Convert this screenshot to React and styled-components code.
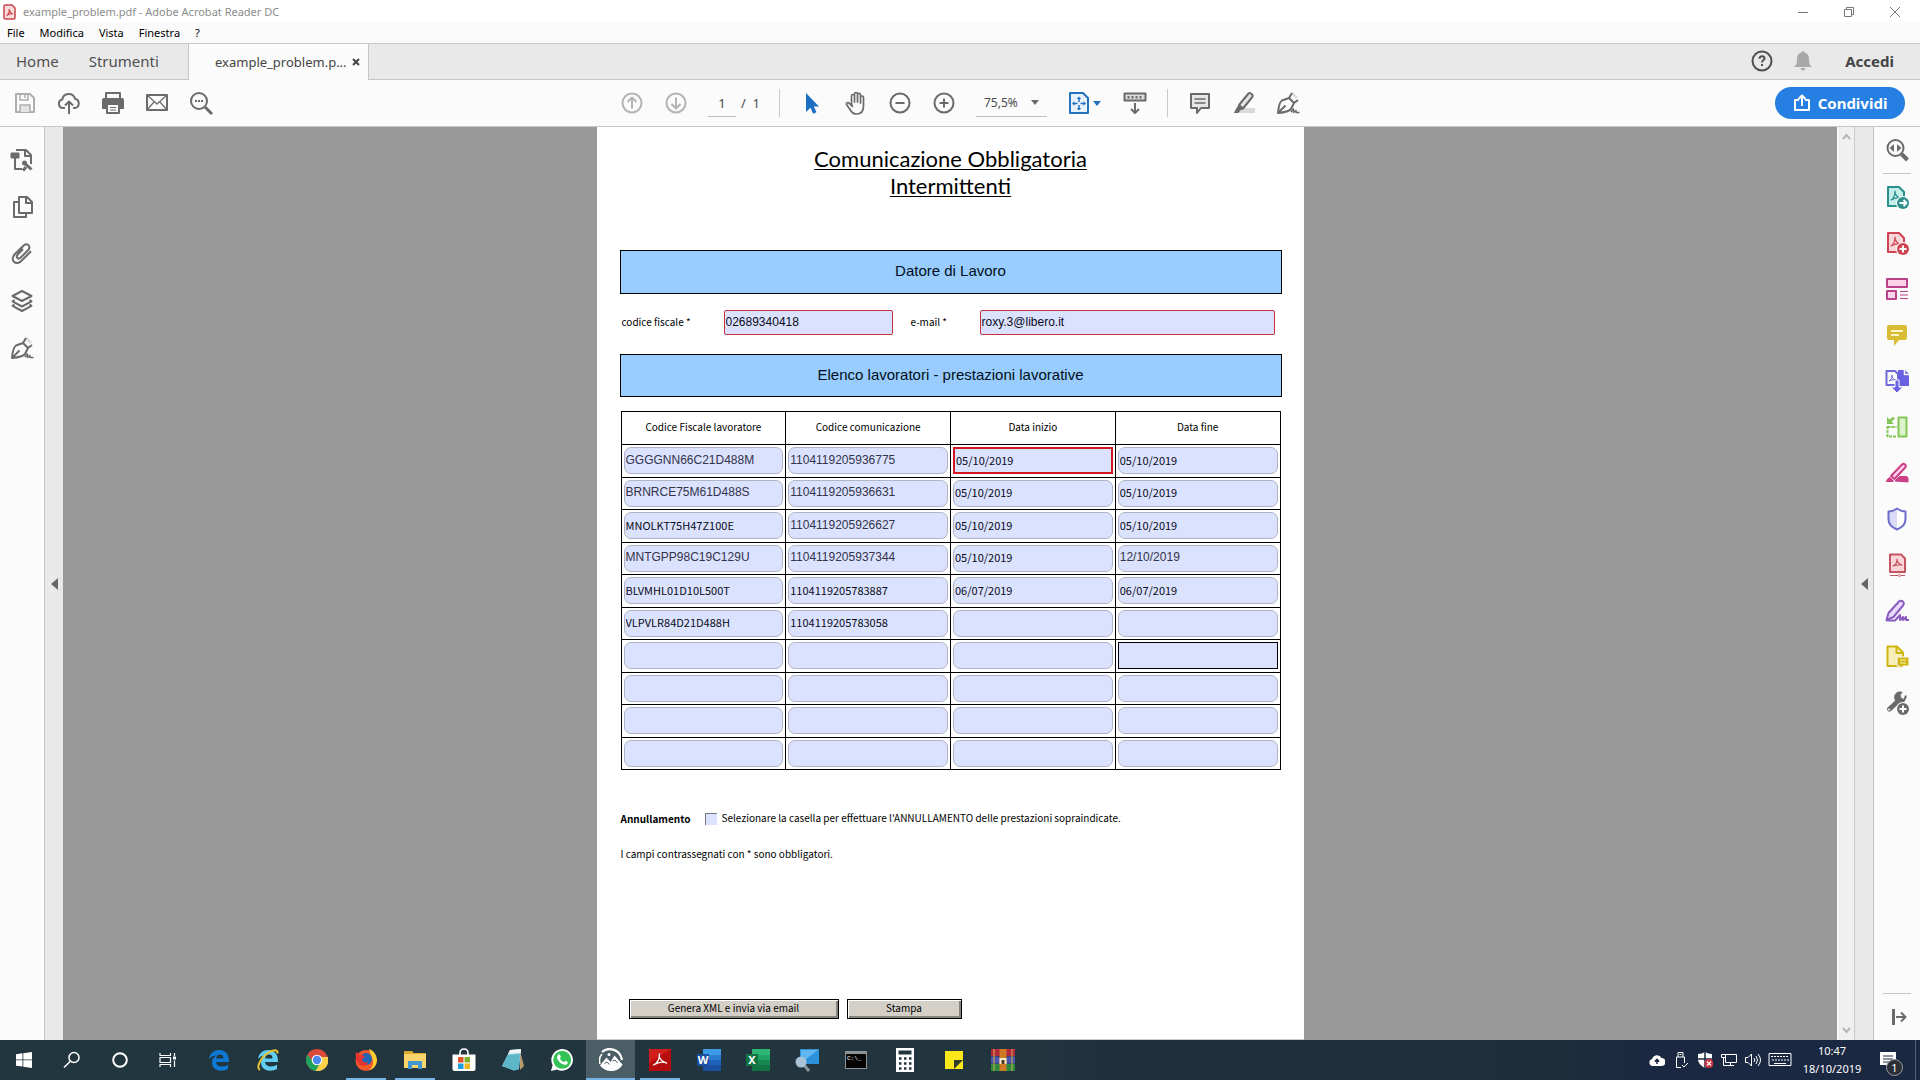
import React from "react";
import styled, { createGlobalStyle } from "styled-components";

const UI_FONT = '"Noto Sans", "Open Sans", sans-serif';
const DOC_FONT = '"Noto Sans CJK JP", "Noto Sans", sans-serif';
const FIELD_FONT = '"Liberation Sans", Arial, sans-serif';

const GlobalStyle = createGlobalStyle`
  * {
    box-sizing: border-box;
  }

  body {
    margin: 0;
    font-family: ${UI_FONT};
    color: #000;
  }

  button,
  input,
  select {
    margin: 0;
    padding: 0;
    border: none;
    border-radius: 0;
    background: none;
    font: inherit;
    color: inherit;
  }

  a {
    color: inherit;
    text-decoration: none;
  }

  svg {
    display: block;
    flex: none;
  }
`;

const Window = styled.div`
  display: flex;
  flex-direction: column;
  min-height: 100vh;
  background: #fbfbfb;
`;

const TitleBar = styled.header`
  display: flex;
  align-items: center;
  height: 23px;
  padding: 0 2px 0 3px;
  gap: 7px;
  background: #fff;
  font-size: 11px;
  line-height: 16px;
  color: #8c8c8c;
`;

const WindowTitle = styled.span`
  flex: 1;
`;

const WindowControls = styled.div`
  display: flex;
`;

const WindowButton = styled.button`
  display: flex;
  align-items: center;
  justify-content: center;
  width: 46px;
  height: 21px;
  color: #777;
`;

const MenuBar = styled.nav`
  display: flex;
  height: 20px;
  padding-left: 7px;
  gap: 15px;
  background: #fafafa;
  font-size: 11px;
  line-height: 20px;
`;

const TabBar = styled.div`
  display: flex;
  align-items: stretch;
  height: 37px;
  border-top: 1px solid #c9c9c9;
  background: #e9e9e9;
  font-size: 15px;
  color: #505050;
`;

const AppTabs = styled.div`
  display: flex;
  align-items: center;
  gap: 30px;
  width: 188px;
  padding: 0 0 2px 16px;
  border-bottom: 1px solid #c6c6c6;
`;

const DocumentTab = styled.div`
  display: flex;
  align-items: center;
  justify-content: space-between;
  width: 181px;
  padding: 0 8px 1px 26px;
  border-left: 1px solid #c6c6c6;
  border-right: 1px solid #c6c6c6;
  background: #fbfbfb;
  font-size: 13px;
  color: #444;
`;

const AccountArea = styled.div`
  display: flex;
  flex: 1;
  align-items: center;
  justify-content: flex-end;
  gap: 17px;
  padding: 0 26px 2px 0;
  border-bottom: 1px solid #c6c6c6;
`;

const SignIn = styled.a`
  margin-left: 13px;
  font-weight: 700;
  color: #444;
`;

const PlainButton = styled.button`
  display: flex;
`;

const Toolbar = styled.div`
  display: grid;
  grid-template-columns: 1fr auto 1fr;
  align-items: center;
  height: 47px;
  border-bottom: 1px solid #c6c6c6;
  background: #fbfbfb;
  color: #6b6b6b;
`;

const ToolGroup = styled.div`
  display: flex;
  align-items: center;
  justify-content: ${({ $align }) => $align || "flex-start"};
  padding: ${({ $padding }) => $padding || "0"};
`;

const ToolButton = styled.button`
  display: flex;
  align-items: center;
  justify-content: center;
  width: ${({ $wide }) => ($wide ? "66px" : "44px")};
  height: 40px;
  padding-left: ${({ $wide }) => ($wide ? "8px" : "0")};
  gap: 2px;
  color: ${({ $color }) => $color || "inherit"};
`;

const PageInput = styled.input`
  width: 28px;
  height: 28px;
  margin-left: 10px;
  border-bottom: 1px solid #bdbdbd;
  font-size: 13px;
  text-align: center;
  color: #4b4b4b;
`;

const PageCount = styled.span`
  width: 33px;
  padding-left: 5px;
  font-size: 13px;
  white-space: pre;
  color: #4b4b4b;
`;

const Separator = styled.span`
  width: 1px;
  height: 28px;
  margin: 0 10px;
  background: #c9c9c9;
`;

const ZoomBox = styled.div`
  display: flex;
  align-items: center;
  width: 71px;
  height: 28px;
  margin-left: 10px;
  padding: 0 8px;
  border-bottom: 1px solid #bdbdbd;
`;

const ZoomSelect = styled.select`
  flex: 1;
  min-width: 0;
  appearance: none;
  outline: none;
  font-size: 12px;
  color: #4b4b4b;
`;

const ShareButton = styled.button`
  display: flex;
  align-items: center;
  justify-content: center;
  gap: 7px;
  width: 130px;
  height: 32px;
  border-radius: 16px;
  background: #2680e4;
  font-size: 15px;
  font-weight: 700;
  color: #fff;
`;

const Workspace = styled.div`
  display: flex;
  flex: 1;
`;

const NavPane = styled.nav`
  display: flex;
  flex-direction: column;
  width: 45px;
  padding-top: 9px;
  border-right: 1px solid #c6c6c6;
  color: #6b6b6b;
`;

const NavButton = styled.button`
  display: flex;
  align-items: center;
  justify-content: center;
  width: 44px;
  height: 47px;
`;

const Gutter = styled.div`
  display: flex;
  align-items: center;
  justify-content: center;
  width: 18px;
  background: #e9e9e9;
  color: #666;
`;

const Canvas = styled.main`
  display: flex;
  flex: 1;
  justify-content: center;
  background: #999;
`;

const Scrollbar = styled.div`
  display: flex;
  flex-direction: column;
  align-items: center;
  justify-content: space-between;
  width: 18px;
  padding: 6px 0;
  border-left: 1px solid #fff;
  border-right: 1px solid #c9c9c9;
  background: #f0f0f0;
  color: #b5b5b5;
`;

const ToolsPane = styled.aside`
  display: flex;
  flex-direction: column;
  align-items: center;
  width: 47px;
  border-left: 1px solid #c6c6c6;
  color: #6b6b6b;
`;

const PaneButton = styled.button`
  display: flex;
  align-items: center;
  justify-content: center;
  width: 44px;
  height: 46px;
`;

const PaneRule = styled.hr`
  width: 28px;
  height: 1px;
  margin: ${({ $bottom }) => ($bottom ? "auto 0 0" : "0")};
  border: none;
  background: #c6c6c6;
`;

const Page = styled.article`
  width: 707px;
  padding: 18px 22px 20px 23px;
  border-bottom: 1px solid #c9c9c9;
  background: #fff;
  font-family: ${DOC_FONT};
  font-size: 10px;
  line-height: 16px;
`;

const PageTitle = styled.h1`
  margin: 0 0 51px;
  font-family: Lato, sans-serif;
  font-size: 22px;
  font-weight: 400;
  line-height: 27px;
  text-align: center;
  text-decoration: underline;
  text-decoration-thickness: 1px;
  text-underline-offset: 2px;
`;

const SectionBar = styled.h2`
  display: flex;
  align-items: center;
  justify-content: center;
  height: ${({ $low }) => ($low ? "43px" : "44px")};
  margin: 0;
  padding-bottom: 2px;
  border: 1px solid #000;
  background: #99ccff;
  font-family: ${FIELD_FONT};
  font-size: 15px;
  font-weight: 400;
  color: #001020;
`;

const EmployerRow = styled.div`
  display: flex;
  align-items: center;
  padding: 16px 7px 19px 2px;
`;

const FieldLabel = styled.label`
  width: ${({ $short }) => ($short ? "69px" : "102px")};
  padding-bottom: 2px;
`;

const EmployerInput = styled.input`
  flex: ${({ $grow }) => ($grow ? "1" : "0 0 169px")};
  height: 25px;
  margin-right: ${({ $grow }) => ($grow ? "0" : "18px")};
  padding: 0 1px 2px;
  border: 1px solid #c8323c;
  border-radius: 2px;
  background: #dbe2fe;
  font-family: ${FIELD_FONT};
  font-size: 12px;
  color: #0a0a20;
`;

const WorkersTable = styled.table`
  width: 660px;
  height: 359px;
  margin: 14px 0 40px 1px;
  border-collapse: collapse;
  table-layout: fixed;

  th,
  td {
    padding: 0 2px;
    border: 1px solid #000;
  }

  th {
    height: 33px;
    padding-bottom: 3px;
    font-weight: 400;
  }
`;

const CELL_BORDERS = {
  required: "2px solid #d01820",
  focused: "1px solid #000",
};

const CellInput = styled.input`
  display: block;
  width: 100%;
  height: 27px;
  padding: 0 1px 2px;
  border: ${({ $mark }) => CELL_BORDERS[$mark] || "1px solid #b0b4c4"};
  border-radius: ${({ $mark }) => ($mark ? "0" : "7px")};
  background: #dbe2fe;
  font-family: ${({ $typed }) => ($typed ? FIELD_FONT : DOC_FONT)};
  font-size: ${({ $typed }) => ($typed ? "12px" : "11px")};
  color: ${({ $typed }) => ($typed ? "#33334a" : "#0a0a20")};
`;

const CancelRow = styled.div`
  display: flex;
  align-items: center;
  height: 18px;
  padding-left: 1px;
`;

const CancelTitle = styled.strong`
  width: 84px;
`;

const CancelLabel = styled.label`
  padding-bottom: 2px;
`;

const Checkbox = styled.input`
  appearance: none;
  width: 12px;
  height: 12px;
  margin-right: 5px;
  border-top: 1px solid #777;
  border-left: 1px solid #777;
  background: #dbe2fe;
`;

const Note = styled.p`
  margin: 18px 0 0;
  padding: 0 0 1px 1px;
`;

const FormButtons = styled.div`
  display: flex;
  gap: 8px;
  margin: 136px 0 0 9px;
`;

const FormButton = styled.button`
  width: ${({ $main }) => ($main ? "210px" : "115px")};
  height: 20px;
  padding-bottom: 2px;
  border: 1px solid #000;
  background: #d4d0c8;
  box-shadow: inset 1px 1px 0 #fff, inset -2px -2px 0 #85827b;
  line-height: 16px;
`;

const Taskbar = styled.footer`
  display: flex;
  height: 40px;
  background: linear-gradient(
    90deg,
    #22363f 0%,
    #22353e 54%,
    #1f303f 57%,
    #1d2e3c 81%,
    #1b2841 86%,
    #1b2842 100%
  );
  color: #fff;
`;

const TaskGroup = styled.div`
  display: flex;
  padding-right: ${({ $system }) => ($system ? "2px" : "0")};
`;

const TaskButton = styled.button`
  display: flex;
  align-items: center;
  justify-content: center;
  width: ${({ $system }) => ($system ? "48px" : "49px")};
  height: 40px;
  background: ${({ $state }) =>
    $state === "active"
      ? "linear-gradient(#76b4e8, #76b4e8) bottom / 100% 2px no-repeat, #4b5d65"
      : $state === "open"
        ? "linear-gradient(#76b4e8, #76b4e8) bottom / 40px 2px no-repeat"
        : "none"};
`;

const Tray = styled.div`
  display: flex;
  align-items: center;
  margin-left: auto;
`;

const TrayButton = styled.button`
  display: flex;
  align-items: center;
  justify-content: center;
  width: ${({ $wide }) => ($wide ? "30px" : "24px")};
  height: 40px;
`;

const Clock = styled.time`
  width: 74px;
  font-size: 11px;
  line-height: 18px;
  text-align: center;
`;

const NoticeButton = styled.button`
  position: relative;
  display: flex;
  align-items: center;
  justify-content: center;
  width: 47px;
  height: 40px;
  padding-right: 8px;
  border-right: 1px solid #55607a;
  margin-right: 4px;
`;

const NoticeBadge = styled.span`
  position: absolute;
  left: 17px;
  top: 19px;
  width: 17px;
  height: 17px;
  border: 1px solid #9aa0a8;
  border-radius: 50%;
  background: #2c3036;
  font-size: 11px;
  line-height: 15px;
  text-align: center;
`;

function Icon({ size = 24, w = 2, fill = "none", children }) {
  return (
    <svg
      width={size}
      height={size}
      viewBox={`0 0 ${size} ${size}`}
      fill={fill}
      stroke="currentColor"
      strokeWidth={w}
      strokeLinejoin="round"
      aria-hidden="true"
    >
      {children}
    </svg>
  );
}

const Caret = () => (
  <svg width="8" height="5" viewBox="0 0 8 5" aria-hidden="true">
    <path d="M0 0h8L4 5z" fill="currentColor" />
  </svg>
);

const CollapseArrow = () => (
  <svg width="7" height="12" viewBox="0 0 7 12" aria-hidden="true">
    <path d="M7 0v12L0 6z" fill="currentColor" />
  </svg>
);

const Chevron = ({ down }) => (
  <svg width="9" height="7" viewBox="0 0 9 7" aria-hidden="true">
    <path
      d={down ? "M1 1l3.500 4L8 1" : "M1 6l3.500-4L8 6"}
      fill="none"
      stroke="currentColor"
      strokeWidth="2"
    />
  </svg>
);

const AppLogo = () => (
  <svg width="13" height="16" viewBox="0 0 13 16" aria-hidden="true">
    <path d="M1 2.500Q1 1 2.500 1H9l3 3v9.500q0 1.500-1.500 1.500h-8Q1 15 1 13.500z" fill="#fbdcdc" stroke="#c8434a" strokeWidth="1.500" />
    <path d="M3.500 11.500c2-1 3-4 2.700-6.500.6 3 1.800 4.500 3.800 5-2.500-.7-4.500 0-6.500 1.500z" fill="none" stroke="#c8434a" strokeWidth="1.200" />
  </svg>
);

const SaveIcon = () => (
  <Icon>
    <path d="M3 3h14l4 4v14H3z" />
    <path d="M7 3v6h8V3M12 4v3" strokeWidth="1.500" />
    <path d="M7 21v-7h10v7" fill="#e4e4e4" strokeWidth="1.500" />
  </Icon>
);

const CloudIcon = () => (
  <Icon>
    <path d="M8 17H6a4.300 4.300 0 0 1-.7-8.500 6.500 6.500 0 0 1 12.700-.7A4.700 4.700 0 0 1 18 17h-2" />
    <path d="M12 23V11M8 14.500l4-4 4 4" />
  </Icon>
);

const PrintIcon = () => (
  <Icon>
    <path d="M5 8V2h14v6" />
    <path d="M1 9q0-2 2-2h18q2 0 2 2v9H1z" fill="currentColor" stroke="none" />
    <path d="M6 13h12v9H6z" fill="#fbfbfb" />
    <path d="M9 16.500h6M9 19h6" strokeWidth="1" />
  </Icon>
);

const MailIcon = () => (
  <Icon>
    <path d="M2 4h20v15H2z" />
    <path d="M2 4l10 9L22 4M2 19l7-8M22 19l-7-8" strokeWidth="1.200" />
  </Icon>
);

const SearchDotsIcon = () => (
  <Icon>
    <circle cx="10" cy="10" r="8" />
    <path d="M16 16l7 7" strokeWidth="3" />
    <path d="M6 10h2M9 10h2M12 10h2" />
  </Icon>
);

const ArrowCircleIcon = ({ down }) => (
  <Icon>
    <circle cx="12" cy="12" r="9.500" />
    {down ? <path d="M12 6.500v11M7.500 13l4.500 4.500 4.500-4.500" /> : <path d="M12 17.500v-11M7.500 11L12 6.500l4.500 4.500" />}
  </Icon>
);

const PointerIcon = () => (
  <Icon w={0} fill="#1d6fc4">
    <path d="M6 2v19l4.500-4.200 2.700 6 3.300-1.500-2.700-5.800H19z" />
  </Icon>
);

const HandIcon = () => (
  <Icon w={1.7}>
    <path d="M7.500 13V5a1.500 1.500 0 0 1 3 0v6V3a1.500 1.500 0 0 1 3 0v8V3.800a1.500 1.500 0 0 1 3 0V12 6.500a1.500 1.500 0 0 1 3 0V15c0 5-2.500 8-7 8-3.500 0-5-1.500-6.500-4.500l-3.500-5c-.5-1.500 1.500-2.500 2.800-1.200l3.200 3.200z" />
  </Icon>
);

const ZoomStepIcon = ({ plus }) => (
  <Icon>
    <circle cx="12" cy="12" r="9.500" />
    <path d="M7.500 12h9" />
    {plus && <path d="M12 7.500v9" />}
  </Icon>
);

const FitIcon = () => (
  <Icon>
    <path d="M3 2h13l5 5v15H3z" fill="#e9f2fb" />
    <path d="M12 7v11M6.500 12.500h11" strokeWidth="1.500" strokeDasharray="4 3" />
    <path d="M9.700 8L12 5.500 14.300 8zM9.700 17l2.300 2.500 2.300-2.500zM7.500 10.200L5 12.500l2.500 2.300zM16.500 10.200l2.500 2.300-2.500 2.300z" fill="currentColor" strokeWidth="0" />
  </Icon>
);

const RulerIcon = () => (
  <Icon>
    <path d="M1.500 2.500h21v7h-21z" fill="#dcdcdc" />
    <path d="M5.500 5v2.500M9.500 5v2.500M13.500 5v2.500M17.500 5v2.500" strokeWidth="2" />
    <path d="M12 12v10M8 18l4 4 4-4" />
  </Icon>
);

const CommentIcon = () => (
  <Icon>
    <path d="M3 3h18v14h-8l-4 5v-5H3z" fill="#e6e6e6" />
    <path d="M6.500 8h11M6.500 12h11" strokeWidth="1.500" />
  </Icon>
);

const MarkerIcon = () => (
  <Icon>
    <path d="M10 17h13v5H7z" fill="#dadada" stroke="none" />
    <path d="M7 14L16.500 2.500q1-1 2.300 0l1.500 1.300q1 1 0 2.200L11 17.500z" fill="#e6e6e6" />
    <path d="M6.500 14.500l4 3.500-2.500 1-1.500 2.500H2.500z" fill="currentColor" strokeWidth="1" />
  </Icon>
);

const PenIcon = () => (
  <Icon>
    <path d="M15 3l5 5 2-2-5-5z" fill="#dedede" stroke="none" />
    <path d="M2 22c.5-6 1.500-11 4-12.500L13 7l5 5-3 6c-2.500 3-8 3.500-13 4zM2.500 21.500l7-7M13 7l3-5M18 12l4-3" />
    <path d="M15 21l2.500-3v3.500l2.500-2v2h3.500" strokeWidth="1.500" />
  </Icon>
);

const CropDocIcon = () => (
  <Icon>
    <path d="M6 2h10l5 5v9M5 10v11h7M15 2v6h6" />
    <path d="M1 5h8v5H1z" fill="currentColor" strokeWidth="1" />
    <circle cx="14.500" cy="15" r="2.500" fill="currentColor" stroke="none" />
    <path d="M15 15.500l6.500 6M16 19l-3 3.500" strokeWidth="3" />
  </Icon>
);

const PagesIcon = () => (
  <Icon>
    <path d="M9 2h8l5 5v11H9zM16 2v6h6" />
    <path d="M9 7H4v15h12v-4" />
  </Icon>
);

const ClipIcon = () => (
  <Icon>
    <path d="M13 7L7.500 12.800c-2 2.300.8 5 3 3L18 8.300c2-2 1.500-4 .4-5.200-1.200-1-3.200-1.200-5 .6L5 12c-2.500 2.700-3 5.200-1.300 7.500 2 2.200 5.100 2 7.300-.2l10-10" />
  </Icon>
);

const LayersIcon = () => (
  <Icon>
    <path d="M12 2l9.500 5L12 12 2.500 7z" />
    <path d="M4.500 11l-2 1.300L12 17.500l9.500-5.200-2-1.300M4.500 15.500l-2 1.300L12 22l9.500-5.200-2-1.300" />
  </Icon>
);

const PaneSearchIcon = () => (
  <Icon>
    <circle cx="10.500" cy="10" r="8" />
    <path d="M16.500 16l6 6" strokeWidth="4" />
    <path d="M9 6v8l-4.500-4zM12 6v8l4.500-4z" fill="currentColor" stroke="none" />
  </Icon>
);

const PdfBadgeIcon = ({ color, tint, children }) => (
  <Icon>
    <path d="M3 2h11l5 5v14H3z" fill={tint} stroke={color} />
    <path d="M6 15c3-1.500 4-4 4-9 0 4 2 6 5 7-4-.8-6 0-9 2z" stroke={color} strokeWidth="1.200" />
    <circle cx="18" cy="18" r="7" fill="#fbfbfb" stroke="none" />
    <circle cx="18" cy="18" r="6" fill={color} stroke="none" />
    <path d={children} stroke="#fff" />
  </Icon>
);

const OrganizeIcon = () => (
  <Icon>
    <path d="M2 2h20v8H2zM2 14h9v8H2z" fill="#fbd3ea" stroke="#bb4289" />
    <path d="M15 14.500h8M15 18h8M15 21.500h8" stroke="#bb4289" strokeWidth="1" />
  </Icon>
);

const NoteIcon = () => (
  <Icon>
    <path d="M4 2h16q2 0 2 2v11q0 2-2 2h-6l-5 6v-6H4q-2 0-2-2V4q0-2 2-2z" fill="#d8bc34" stroke="none" />
    <path d="M6 8h12M6 12h8" stroke="#fff5c4" strokeWidth="1.800" />
  </Icon>
);

const CombineIcon = () => (
  <Icon>
    <path d="M13 1h7l4 4v12H13z" fill="#6a62e4" stroke="none" />
    <path d="M19.500 0v5.500H25" stroke="#fbfbfb" strokeWidth="1.500" />
    <path d="M1.500 2H10l3 3v11H1.500z" fill="#fff" stroke="#7068d8" />
    <path d="M4 12c2-1 3-3 3-6 0 3 1 4 4 5-3-.5-5 0-7 1z" stroke="#7068d8" strokeWidth="1" />
    <path d="M10 11h4v7h4l-6 6-6-6h4z" fill="#6a62e4" stroke="#fbfbfb" strokeWidth="1" />
  </Icon>
);

const CompareIcon = () => (
  <Icon>
    <path d="M13.500 2.500h8v19h-8z" fill="#daf3c8" stroke="#84c556" />
    <path d="M2.500 11v10.500h9M2.500 12h9" stroke="#84c556" strokeDasharray="3 1" />
    <path d="M2 2v7h7L6.500 6.500 10 3.500 8 1.800 4.500 4.500z" fill="#84c556" stroke="none" />
  </Icon>
);

const RedactIcon = () => (
  <Icon>
    <path d="M10 20l4.500-4.500H21q2 0 2 2V21z" fill="#ca3f86" stroke="#ca3f86" strokeWidth="1" />
    <path d="M6 15L17 3.500q1.500-1.300 3 0 1.500 1.500.2 3L9.500 18z" fill="#fbd3ea" stroke="#ca3f86" />
    <path d="M5 16l4 4-1 1H1q0-3 4-5z" fill="#ca3f86" stroke="none" />
  </Icon>
);

const ShieldIcon = () => (
  <Icon>
    <path d="M12 1.500Q16 4.500 21 4.500V12c0 5-4 9-9 11-5-2-9-6-9-11V4.500q5 0 9-3z" fill="#fff" stroke="none" />
    <path d="M12 2v20c-5-2-8-5.500-8-10V5q4 0 8-3z" fill="#d9dbf7" stroke="none" />
    <path d="M12 1.500Q16 4.500 20.500 4.500V12c0 5-3.500 8.500-8.500 10.500C7 20.500 3.500 17 3.500 12V4.500Q8 4.500 12 1.500z" stroke="#6c6ccb" />
  </Icon>
);

const PdfStampIcon = () => (
  <Icon>
    <path d="M5 1.500h11l4 4V19H5z" fill="#fbd6d8" stroke="#c45560" />
    <path d="M8 13c3-1 4-3 4-7 0 3 2 5 5 6-4-.5-6 0-9 1z" stroke="#c45560" strokeWidth="1.200" />
    <path d="M5 22.500h8M16 22.500h4" stroke="#c45560" strokeWidth="1" />
    <circle cx="14.500" cy="22.500" r="1" stroke="#c45560" strokeWidth="1" />
  </Icon>
);

const SignIcon = () => (
  <Icon>
    <path d="M1.500 21l2-7L14 2.500q2-1.500 4 0 1.500 2 0 4L8.500 18z" fill="#e8daf8" stroke="#8a5cc2" />
    <path d="M1.500 21.500H10l5-5.500v5l3-3v3l3-3v3h3" stroke="#8a5cc2" />
  </Icon>
);

const SendNoteIcon = () => (
  <Icon>
    <path d="M2.500 1.500H12l6 6V21H2.500z" fill="#f7eeb8" stroke="#cfb514" />
    <path d="M11.500 1.500V8H18" stroke="#cfb514" />
    <path d="M12 12h12v9h-6l-3 3v-3h-3z" fill="#cfb514" stroke="#fbfbfb" strokeWidth="1" />
    <path d="M15 15h6M15 18h6" stroke="#fff5b0" strokeWidth="1" />
  </Icon>
);

const MoreToolsIcon = () => (
  <Icon>
    <path d="M4.500 18L15 8.500" strokeWidth="5" strokeLinecap="round" />
    <path d="M18.500 1.500A6 6 0 1 0 20 10" fill="currentColor" stroke="none" />
    <path d="M18.500 0l-3 4 1 3 3 1 3.500-4v5h-3v-8z" fill="#fbfbfb" stroke="none" />
    <path d="M20.500 4.500q.5 3-2 5" />
    <circle cx="4" cy="18.500" r="1" fill="#fbfbfb" stroke="none" />
    <circle cx="18" cy="18" r="7" fill="#fbfbfb" stroke="none" />
    <circle cx="18" cy="18" r="6" fill="currentColor" stroke="none" />
    <path d="M14.500 18h7M18 14.500v7" stroke="#fff" />
  </Icon>
);

const ExitIcon = () => (
  <Icon>
    <path d="M8.500 4v16" strokeWidth="3" />
    <path d="M11 12h9M16 7.500l4.500 4.500-4.500 4.500" />
  </Icon>
);

/* taskbar icons */

const StartIcon = () => (
  <Icon size={16} w={0} fill="#fff">
    <path d="M0 2.200L6.500 1.300v6.200H0zM7.300 1.200L16 0v7.500H7.300zM0 8.300h6.500v6.300L0 13.700zM7.300 8.300H16V16l-8.700-1.200z" />
  </Icon>
);

const TaskSearchIcon = () => (
  <Icon size={18} w={1.5}>
    <circle cx="11" cy="6.500" r="5" />
    <path d="M7.300 10.200L1 16.500" />
  </Icon>
);

const CortanaIcon = () => (
  <Icon size={18}>
    <circle cx="9" cy="9" r="6.800" />
  </Icon>
);

const TaskViewIcon = () => (
  <Icon size={18} w={1.2}>
    <path d="M1 2v2.500h10.500V2M1 6.500h10.500v5H1zM1 16v-2.500h10.500V16M15.500 2v3M15.500 9.500V16" />
    <path d="M14 5.500h3v3h-3z" fill="#fff" stroke="none" />
  </Icon>
);

const EdgeIcon = ({ ie }) => (
  <Icon size={22} w={0} fill={ie ? "#62cdf3" : "#0f78d4"}>
    <path d="M1 10C2 4 6 1 11.500 1 18 1 21 6 21 12v1H8c.3 3 3 4.500 6 4.500 2.200 0 4.200-.6 6-1.700V20c-2 1.200-4.500 1.700-7 1.700-6 0-9-3.700-9-8.200 0-3 1.600-5.500 4.500-7C5.500 6.600 3 7.500 1 10zM8.200 9.500h7.300c0-2.500-1.200-4-3.500-4s-3.600 1.600-3.800 4z" />
    {ie && (
      <path d="M3 21C-1 19 3 9 11 4c5-3.500 10-4 9.500.5" fill="none" stroke="#e8c233" strokeWidth="2" />
    )}
  </Icon>
);

const ChromeIcon = () => (
  <Icon size={22} w={0}>
    <circle cx="11" cy="11" r="11" fill="#db4a3c" />
    <path d="M1.500 5.500A11 11 0 0 0 10 22l5-9-8 0z" fill="#1fa25b" />
    <path d="M22 8A11 11 0 0 1 9.500 22l5.500-9-3-5z" fill="#fdd04b" />
    <circle cx="11" cy="11" r="5.300" fill="#fff" />
    <circle cx="11" cy="11" r="4.200" fill="#4a87ee" />
  </Icon>
);

const FirefoxIcon = () => (
  <Icon size={22} w={0}>
    <circle cx="11" cy="11.500" r="10.500" fill="#f4592a" />
    <path d="M14 0c5 2 8 6 8 11.500a10.500 10.500 0 0 1-8 10c4-4 5-8 3-13-1-3-2.500-5-3-8.500z" fill="#ffcb35" />
    <circle cx="11" cy="10" r="6" fill="#1f66b8" />
    <path d="M1 3l4 3c2-.5 4 .5 5 2l-3 2c0 3 3 4 6 3-1 3-4 5-8 3-3-2-5-6-4-13z" fill="#e8352f" />
  </Icon>
);

const FolderIcon = () => (
  <Icon size={22} w={0}>
    <path d="M0 2h8l2 2h12v14H0z" fill="#dca92f" />
    <path d="M0 5h22v14H0z" fill="#fbd46b" />
    <path d="M4 20v-7q0-1 1-1h12q1 0 1 1v7h-4v-4H8v4z" fill="#4398d3" />
  </Icon>
);

const StoreIcon = () => (
  <Icon size={24} w={0}>
    <path d="M8 7V5q0-4 4-4t4 4v2" fill="none" stroke="#fff" strokeWidth="1.600" />
    <path d="M.5 6.500h23V21q0 2-2 2h-19q-2 0-2-2z" fill="#fff" />
    <path d="M6 9h5.500v5.500H6z" fill="#e0532d" />
    <path d="M12.500 9H18v5.500h-5.500z" fill="#7fb02c" />
    <path d="M6 15.500h5.500V21H6z" fill="#1a9fe0" />
    <path d="M12.500 15.500H18V21h-5.500z" fill="#f2b51c" />
  </Icon>
);

const NotepadIcon = () => (
  <Icon size={22} w={0}>
    <path d="M18 2l4 15-4 4z" fill="#bb9a6c" />
    <path d="M8 1l11-1-2 20-5 1.500L0 17z" fill="#8fd0dc" />
    <path d="M6 6l12-1-1.500 15.500-4.500 1L0 17z" fill="#5cb6c8" />
    <path d="M8 1l11-1v4L6 5z" fill="#eef4f4" />
  </Icon>
);

const WhatsAppIcon = () => (
  <Icon size={22} w={0}>
    <path d="M0 22l1.600-6A10.800 10.800 0 1 1 6 20.400z" fill="#fff" />
    <circle cx="11.200" cy="10.800" r="9" fill="#35c256" />
    <path d="M7 6c1-1.200 2-.7 2.300.4l.6 1.600-1 1.500c1 2 2.300 3 4 3.700l1.300-1.500 2.600 1.300c.3 2-1.400 3-3.300 2.800C9.500 15 6 11 6 8z" fill="#fff" />
  </Icon>
);

const PhotosIcon = () => (
  <Icon size={24} w={0}>
    <path d="M3 4C8-1 21 0 23 12" fill="none" stroke="#fff" strokeWidth="2.200" />
    <path d="M1 16C0 12 1 8 3 6" fill="none" stroke="#fff" strokeWidth="1.500" />
    <path d="M1 17.500l6.500-8 4 4.500 4-6.500 8 9c-2 4-6 6.500-11 6.500-5 0-9-2-11.500-5.500z" fill="#fff" />
    <circle cx="10" cy="6.500" r="1.500" fill="#fff" />
    <path d="M5.500 15.500l2.500-1.500 2.500 2.500M13.500 13l2.500-1 2.500 3" fill="none" stroke="#4b5d65" strokeWidth="1" />
  </Icon>
);

const AcrobatIcon = () => (
  <Icon size={22} w={0}>
    <path d="M0 0h22v22H0z" fill="#b50d0d" />
    <path d="M0 0h22L0 14z" fill="#d01f1a" />
    <path d="M4.500 16c4-2 6-6 6-11-1.500 4 3 8 7 9-4-1.500-9-.5-13 2z" fill="none" stroke="#fff" strokeWidth="1.300" />
  </Icon>
);

const OfficeIcon = ({ letter, colors }) => (
  <Icon size={24} w={0}>
    <path d="M6 1h18v6H6z" fill={colors[0]} />
    <path d="M6 7h18v5H6z" fill={colors[1]} />
    <path d="M6 12h18v5H6z" fill={colors[2]} />
    <path d="M6 17h18v6H6z" fill={colors[3]} />
    <path d="M0 6h12v12H0z" fill={colors[3]} />
    <text x="6" y="16" fill="#fff" fontFamily="Noto Sans" fontSize="11" fontWeight="700" textAnchor="middle">
      {letter}
    </text>
  </Icon>
);

const RemoteIcon = () => (
  <Icon size={24} w={0}>
    <path d="M5 1h19v15H5z" fill="#2d92dc" />
    <path d="M6 2h17L6 15z" fill="#62b6f2" />
    <path d="M9 17l5 6" stroke="#8a97a0" strokeWidth="3" />
    <circle cx="6" cy="14" r="5.500" fill="#a9c4d6" />
  </Icon>
);

const ConsoleIcon = () => (
  <Icon size={22} w={0}>
    <path d="M0 2h22v18H0z" fill="#8e9396" />
    <path d="M1 5h20v14H1z" fill="#050505" />
    <text x="2" y="11" fill="#fff" fontFamily="Liberation Mono" fontSize="6">
      C:\_
    </text>
  </Icon>
);

const CalculatorIcon = () => (
  <Icon size={24} w={0}>
    <path d="M3 0h18v24H3z" fill="#fff" />
    <path d="M5.500 2.500h13v4h-13z" fill="#22353e" />
    <path d="M6 10.500h13M6 15.500h13M6 20.500h13" stroke="#22353e" strokeWidth="2.500" strokeDasharray="2.500 2.500" />
  </Icon>
);

const StickyIcon = () => (
  <Icon size={18} w={0}>
    <path d="M0 0h18v18H0z" fill="#fbe818" />
    <path d="M9 9h9l-9 9z" fill="#333a2a" />
  </Icon>
);

const WinRarIcon = () => (
  <Icon size={24} w={0}>
    <path d="M0 1h24v7H0z" fill="#b3283c" />
    <path d="M0 8.500h24v7H0z" fill="#4a55b0" />
    <path d="M0 16h24v7H0z" fill="#2b8a3c" />
    <path d="M3 1v22M21 1v22" stroke="#d9b048" strokeWidth="1" />
    <path d="M8.500 1h7v22h-7z" fill="#cf7a24" />
    <path d="M8.500 10h7v6h-7z" fill="#f6ead0" />
    <path d="M10.500 12h3v4h-3z" fill="#5a3a1c" />
  </Icon>
);

const menus = ["File", "Modifica", "Vista", "Finestra", "?"];

const navItems = [
  ["Strumenti pagina", <CropDocIcon />],
  ["Miniature", <PagesIcon />],
  ["Allegati", <ClipIcon />],
  ["Livelli", <LayersIcon />],
  ["Firme", <PenIcon />],
];

const paneItems = [
  ["Esporta PDF", <PdfBadgeIcon color="#29908c" tint="#c4eeea">M14.500 18h6.500M18.500 15l3 3-3 3</PdfBadgeIcon>],
  ["Crea PDF", <PdfBadgeIcon color="#cc4452" tint="#fbd6d8">M14.500 18h7M18 14.500v7</PdfBadgeIcon>],
  ["Organizza pagine", <OrganizeIcon />],
  ["Commento", <NoteIcon />],
  ["Combina file", <CombineIcon />],
  ["Confronta", <CompareIcon />],
  ["Oscura", <RedactIcon />],
  ["Proteggi", <ShieldIcon />],
  ["Ottimizza PDF", <PdfStampIcon />],
  ["Compila e firma", <SignIcon />],
  ["Invia per commenti", <SendNoteIcon />],
  ["Altri strumenti", <MoreToolsIcon />],
];

const systemTasks = [
  ["Start", <StartIcon />],
  ["Cerca", <TaskSearchIcon />],
  ["Cortana", <CortanaIcon />],
  ["Visualizzazione attività", <TaskViewIcon />],
];

const tasks = [
  ["Edge", <EdgeIcon />],
  ["Internet Explorer", <EdgeIcon ie />],
  ["Chrome", <ChromeIcon />],
  ["Firefox", <FirefoxIcon />, "open"],
  ["Esplora file", <FolderIcon />, "open"],
  ["Store", <StoreIcon />],
  ["Blocco note", <NotepadIcon />],
  ["WhatsApp", <WhatsAppIcon />],
  ["Immagini", <PhotosIcon />, "active"],
  ["Acrobat Reader", <AcrobatIcon />, "open"],
  ["Word", <OfficeIcon letter="W" colors={["#3d9be8", "#2b7cd3", "#1f62bb", "#1b4f9f"]} />],
  ["Excel", <OfficeIcon letter="X" colors={["#2fb574", "#1fa365", "#18864f", "#137443"]} />],
  ["Desktop remoto", <RemoteIcon />],
  ["Prompt dei comandi", <ConsoleIcon />],
  ["Calcolatrice", <CalculatorIcon />],
  ["Memo", <StickyIcon />],
  ["WinRAR", <WinRarIcon />],
];

const columns = ["Codice Fiscale lavoratore", "Codice comunicazione", "Data inizio", "Data fine"];

// t: value typed with the plain field font
const t = (value) => ({ value, typed: true });
const v = (value, mark) => ({ value, mark });

const rows = [
  [t("GGGGNN66C21D488M"), t("1104119205936775"), v("05/10/2019", "required"), v("05/10/2019")],
  [t("BRNRCE75M61D488S"), t("1104119205936631"), v("05/10/2019"), v("05/10/2019")],
  [v("MNOLKT75H47Z100E"), t("1104119205926627"), v("05/10/2019"), v("05/10/2019")],
  [t("MNTGPP98C19C129U"), t("1104119205937344"), v("05/10/2019"), t("12/10/2019")],
  [v("BLVMHL01D10L500T"), v("1104119205783887"), v("06/07/2019"), v("06/07/2019")],
  [v("VLPVLR84D21D488H"), v("1104119205783058"), v(""), v("")],
  [v(""), v(""), v(""), v("", "focused")],
  [v(""), v(""), v(""), v("")],
  [v(""), v(""), v(""), v("")],
  [v(""), v(""), v(""), v("")],
];

function Header() {
  return (
    <>
      <TitleBar>
        <AppLogo />
        <WindowTitle>example_problem.pdf - Adobe Acrobat Reader DC</WindowTitle>
        <WindowControls>
          <WindowButton aria-label="Riduci a icona">
            <Icon size={12} w={1}><path d="M1 6.500h10" /></Icon>
          </WindowButton>
          <WindowButton aria-label="Ripristina">
            <Icon size={12} w={1}><path d="M1.500 3.500h7v7h-7zM3.500 3.500v-2h7v7h-2" /></Icon>
          </WindowButton>
          <WindowButton aria-label="Chiudi">
            <Icon size={12} w={1}><path d="M1 1l10 10M11 1L1 11" /></Icon>
          </WindowButton>
        </WindowControls>
      </TitleBar>
      <MenuBar>
        {menus.map((menu) => (
          <a href="#" key={menu}>{menu}</a>
        ))}
      </MenuBar>
      <TabBar>
        <AppTabs>
          <a href="#">Home</a>
          <a href="#">Strumenti</a>
        </AppTabs>
        <DocumentTab>
          <span>example_problem.p...</span>
          <PlainButton aria-label="Chiudi scheda">
            <Icon size={8}><path d="M1 1l6 6M7 1L1 7" /></Icon>
          </PlainButton>
        </DocumentTab>
        <AccountArea>
          <PlainButton aria-label="Guida">
            <Icon>
              <circle cx="12" cy="12" r="9.500" />
              <path d="M9.500 9.700q0-2.500 2.500-2.500t2.500 2.300c0 1.500-2.500 1.700-2.500 4M12 15v2" />
            </Icon>
          </PlainButton>
          <PlainButton aria-label="Notifiche">
            <Icon w={0} fill="#a9a9a9">
              <path d="M12 2q1.500 0 1.500 1.500C17 4.500 18 7 18 10c0 4 .5 6 3 8H3c2.500-2 3-4 3-8 0-3 1-5.500 4.500-6.500Q10.500 2 12 2zM9.500 19h5q-.5 2.500-2.500 2.500T9.500 19z" />
            </Icon>
          </PlainButton>
          <SignIn href="#">Accedi</SignIn>
        </AccountArea>
      </TabBar>
    </>
  );
}

function MainToolbar() {
  return (
    <Toolbar>
      <ToolGroup $padding="0 0 0 3px">
        <ToolButton aria-label="Salva" $color="#aeaeae"><SaveIcon /></ToolButton>
        <ToolButton aria-label="Carica"><CloudIcon /></ToolButton>
        <ToolButton aria-label="Stampa file"><PrintIcon /></ToolButton>
        <ToolButton aria-label="Invia"><MailIcon /></ToolButton>
        <ToolButton aria-label="Trova"><SearchDotsIcon /></ToolButton>
      </ToolGroup>
      <ToolGroup>
        <ToolButton aria-label="Pagina precedente" $color="#b4b4b4"><ArrowCircleIcon /></ToolButton>
        <ToolButton aria-label="Pagina successiva" $color="#b4b4b4"><ArrowCircleIcon down /></ToolButton>
        <PageInput aria-label="Pagina" defaultValue="1" />
        <PageCount>/  1</PageCount>
        <Separator />
        <ToolButton aria-label="Selezione"><PointerIcon /></ToolButton>
        <ToolButton aria-label="Mano"><HandIcon /></ToolButton>
        <ToolButton aria-label="Riduci"><ZoomStepIcon /></ToolButton>
        <ToolButton aria-label="Ingrandisci"><ZoomStepIcon plus /></ToolButton>
        <ZoomBox>
          <ZoomSelect aria-label="Zoom" defaultValue="75,5%">
            <option>75,5%</option>
          </ZoomSelect>
          <Caret />
        </ZoomBox>
        <ToolButton aria-label="Adatta" $wide $color="#2272bd">
          <FitIcon />
          <Caret />
        </ToolButton>
        <ToolButton aria-label="Scorrimento"><RulerIcon /></ToolButton>
        <Separator />
        <ToolButton aria-label="Aggiungi nota"><CommentIcon /></ToolButton>
        <ToolButton aria-label="Evidenzia"><MarkerIcon /></ToolButton>
        <ToolButton aria-label="Firma"><PenIcon /></ToolButton>
      </ToolGroup>
      <ToolGroup $align="flex-end" $padding="0 15px 0 0">
        <ShareButton>
          <Icon size={18}>
            <path d="M6 6H2v10h14V6h-4M9 12V2M5.500 5L9 1.500 12.500 5" />
          </Icon>
          Condividi
        </ShareButton>
      </ToolGroup>
    </Toolbar>
  );
}

function FormPage() {
  return (
    <Page>
      <PageTitle>
        Comunicazione Obbligatoria
        <br />
        Intermittenti
      </PageTitle>
      <SectionBar>Datore di Lavoro</SectionBar>
      <EmployerRow>
        <FieldLabel htmlFor="codice">codice fiscale *</FieldLabel>
        <EmployerInput id="codice" defaultValue="02689340418" />
        <FieldLabel htmlFor="email" $short>e-mail *</FieldLabel>
        <EmployerInput id="email" defaultValue="roxy.3@libero.it" $grow />
      </EmployerRow>
      <SectionBar $low>Elenco lavoratori - prestazioni lavorative</SectionBar>
      <WorkersTable>
        <thead>
          <tr>
            {columns.map((column) => (
              <th key={column} scope="col">{column}</th>
            ))}
          </tr>
        </thead>
        <tbody>
          {rows.map((row, i) => (
            <tr key={i}>
              {row.map((cell, j) => (
                <td key={j}>
                  <CellInput
                    aria-label={`${columns[j]} ${i + 1}`}
                    defaultValue={cell.value}
                    $typed={cell.typed}
                    $mark={cell.mark}
                  />
                </td>
              ))}
            </tr>
          ))}
        </tbody>
      </WorkersTable>
      <CancelRow>
        <CancelTitle>Annullamento</CancelTitle>
        <Checkbox type="checkbox" id="annulla" />
        <CancelLabel htmlFor="annulla">
          Selezionare la casella per effettuare l'ANNULLAMENTO delle prestazioni sopraindicate.
        </CancelLabel>
      </CancelRow>
      <Note>I campi contrassegnati con * sono obbligatori.</Note>
      <FormButtons>
        <FormButton $main>Genera XML e invia via email</FormButton>
        <FormButton>Stampa</FormButton>
      </FormButtons>
    </Page>
  );
}

function SystemTaskbar() {
  return (
    <Taskbar>
      <TaskGroup $system>
        {systemTasks.map(([name, icon]) => (
          <TaskButton key={name} aria-label={name} $system>{icon}</TaskButton>
        ))}
      </TaskGroup>
      <TaskGroup>
        {tasks.map(([name, icon, state]) => (
          <TaskButton key={name} aria-label={name} $state={state}>{icon}</TaskButton>
        ))}
      </TaskGroup>
      <Tray>
        <TrayButton aria-label="Cloud">
          <Icon size={16} w={0} fill="#fff">
            <path d="M3.500 14a3.500 3.500 0 0 1-.3-6.900A5 5 0 0 1 12.500 6 4 4 0 0 1 12.500 14z" />
            <path d="M8 12V7.500M5.800 9.500L8 7.300l2.200 2.200" fill="none" stroke="#1b2841" strokeWidth="1.500" />
          </Icon>
        </TrayButton>
        <TrayButton aria-label="USB">
          <Icon size={16} w={1}>
            <path d="M5 5V.5h5V5M3.500 5h8v6M3.500 5v10.500H8M6.500 2.500h2M9 13l2 2 4-4" />
          </Icon>
        </TrayButton>
        <TrayButton aria-label="Sicurezza">
          <Icon size={16} w={0} fill="#fff">
            <path d="M8 0q3 2 7 2v5c0 4-3 7-7 9-4-2-7-5-7-9V2q4 0 7-2z" />
            <path d="M8 0v16M1 7h14" stroke="#1b2841" strokeWidth="1.500" />
            <circle cx="12" cy="11.500" r="4.500" fill="#cf3440" />
            <path d="M10 9.500l4 4M14 9.500l-4 4" stroke="#fff" strokeWidth="1.200" />
          </Icon>
        </TrayButton>
        <TrayButton aria-label="Rete">
          <Icon size={16} w={1}>
            <path d="M4.500 2.500h11v8h-11zM.5 2.500h4v3h-4zM2.500 5.500v8H13M9.500 10.500v3" />
          </Icon>
        </TrayButton>
        <TrayButton aria-label="Volume">
          <Icon size={16} w={1}>
            <path d="M.5 5.500H3l3.500-3.500v12L3 10.500H.5zM9 6q1.500 2 0 4M11 4q3 4 0 8M13 2q5 6 0 12" />
          </Icon>
        </TrayButton>
        <TrayButton aria-label="Tastiera" $wide>
          <Icon size={24} w={1}>
            <path d="M1 5.500h22v12H1zM6 15.500h12" />
            <path d="M3 8.500h18M4 12h17" strokeDasharray="2 1" />
          </Icon>
        </TrayButton>
        <Clock>
          10:47
          <br />
          18/10/2019
        </Clock>
        <NoticeButton aria-label="Notifiche di sistema">
          <Icon size={18} w={0}>
            <path d="M1 1h16v13h-6v4l-4-4H1z" fill="#fff" />
            <path d="M4 5h10M4 8h10M4 11h6" stroke="#1b2841" strokeWidth="1" />
          </Icon>
          <NoticeBadge>1</NoticeBadge>
        </NoticeButton>
      </Tray>
    </Taskbar>
  );
}

export default function App() {
  return (
    <Window>
      <GlobalStyle />
      <Header />
      <MainToolbar />
      <Workspace>
        <NavPane>
          {navItems.map(([name, icon]) => (
            <NavButton key={name} aria-label={name}>{icon}</NavButton>
          ))}
        </NavPane>
        <Gutter><CollapseArrow /></Gutter>
        <Canvas>
          <FormPage />
        </Canvas>
        <Scrollbar>
          <Chevron />
          <Chevron down />
        </Scrollbar>
        <Gutter><CollapseArrow /></Gutter>
        <ToolsPane>
          <PaneButton aria-label="Cerca strumenti"><PaneSearchIcon /></PaneButton>
          <PaneRule />
          {paneItems.map(([name, icon]) => (
            <PaneButton key={name} aria-label={name}>{icon}</PaneButton>
          ))}
          <PaneRule $bottom />
          <PaneButton aria-label="Espandi"><ExitIcon /></PaneButton>
        </ToolsPane>
      </Workspace>
      <SystemTaskbar />
    </Window>
  );
}
